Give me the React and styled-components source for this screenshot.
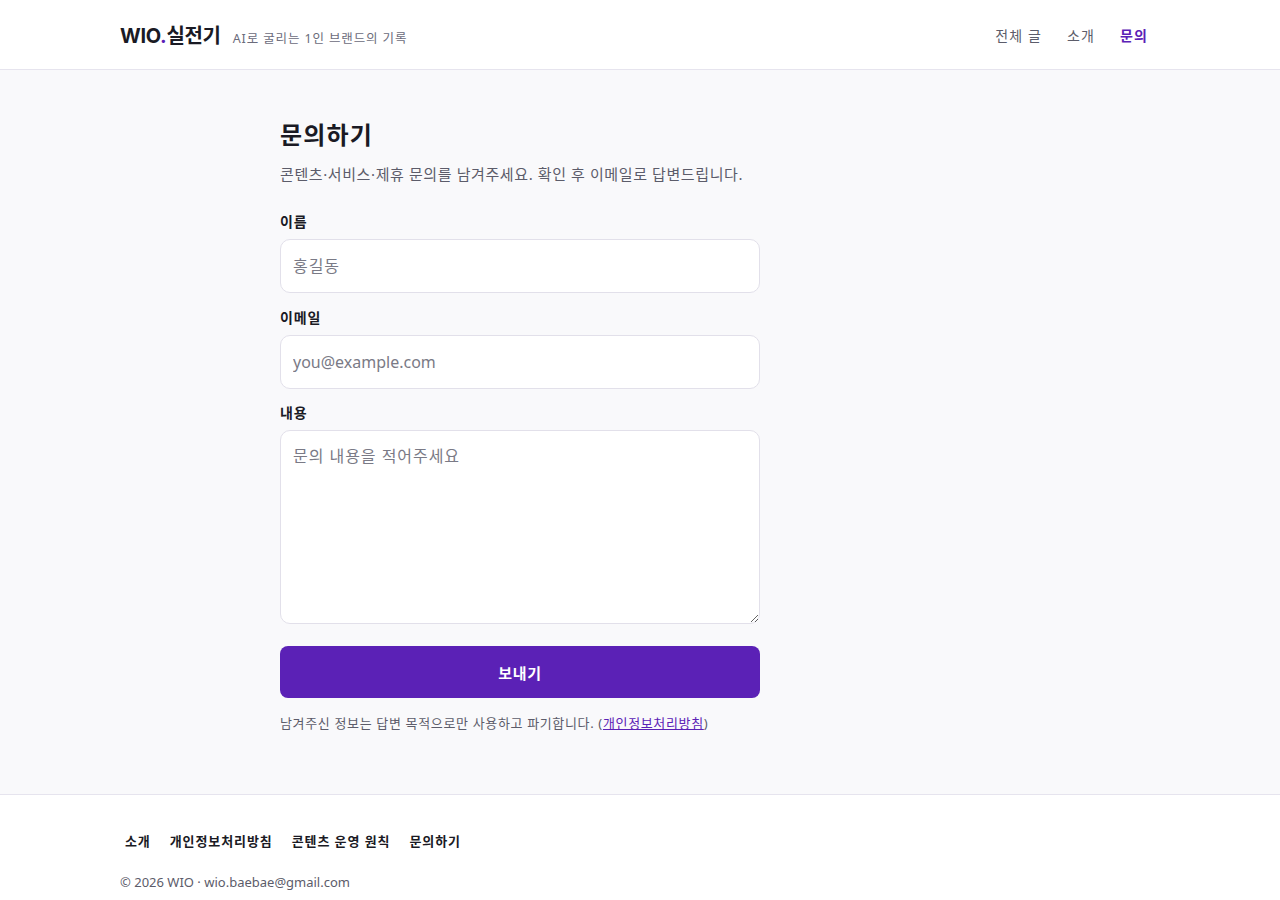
import React from 'react';
import styled, { createGlobalStyle } from 'styled-components';

const Global = createGlobalStyle`
  * { box-sizing: border-box; }
  body {
    margin: 0;
    background: #fff;
    font-family: "Noto Sans", "Noto Sans CJK KR", sans-serif;
    color: #1a1a24;
  }
`;

const Header = styled.header`
  height: 70px;
  background: #fff;
  border-bottom: 1px solid #e6e4ee;
`;

const Bar = styled.div`
  max-width: 1040px;
  height: 100%;
  margin: 0 auto;
  display: flex;
  align-items: center;
  justify-content: space-between;
`;

const Brand = styled.div`
  display: flex;
  align-items: baseline;
  gap: 12px;
`;

const Logo = styled.a`
  font-family: "Inter", "Noto Sans CJK KR", sans-serif;
  font-size: 20px;
  font-weight: 700;
  letter-spacing: -0.3px;
  color: #1a1a24;
  text-decoration: none;
  span { color: #5b21b6; }
`;

const Tagline = styled.span`
  font-size: 12.5px;
  letter-spacing: 0.07em;
  color: #6b6b7b;
`;

const Nav = styled.nav`
  display: flex;
  gap: 25px;
  margin-right: 12px;
`;

const NavLink = styled.a`
  font-size: 14px;
  letter-spacing: 0.08em;
  text-decoration: none;
  color: ${p => (p.$active ? '#5b21b6' : '#5c5c6a')};
  font-weight: ${p => (p.$active ? 600 : 400)};
`;

const Main = styled.main`
  background: #f9f9fb;
  padding: 49px 0 61px;
`;

const Container = styled.div`
  max-width: 720px;
  margin: 0 auto;
`;

const Column = styled.div`
  max-width: 480px;
`;

const Title = styled.h1`
  margin: 0;
  font-size: 24px;
  line-height: 32px;
  letter-spacing: 0.05em;
  font-weight: 700;
  color: #1a1a24;
`;

const Lead = styled.p`
  margin: 12px 0 27px;
  font-size: 15px;
  line-height: 22px;
  letter-spacing: 0.04em;
  color: #5c5c6a;
`;

const Form = styled.form`
  display: flex;
  flex-direction: column;
`;

const Label = styled.label`
  display: block;
  font-size: 14px;
  line-height: 20px;
  letter-spacing: 0.06em;
  font-weight: 700;
  color: #1a1a24;
  margin-bottom: 7px;
`;

const Field = styled.div`
  margin-bottom: 14.5px;
`;

const inputBase = `
  display: block;
  width: 100%;
  border: 1px solid #e2e0ea;
  border-radius: 10px;
  background: #fff;
  font-family: "Noto Sans", "Noto Sans CJK KR", sans-serif;
  font-size: 16px;
  color: #1a1a24;
  outline: none;
  &::placeholder { color: #7a7a86; }
`;

const Input = styled.input`
  ${inputBase}
  height: 54px;
  padding: 0 12px;
  letter-spacing: ${p => (p.$korean ? '0.06em' : '0')};
`;

const TextArea = styled.textarea`
  ${inputBase}
  height: 194px;
  padding: 13px 12px;
  line-height: 24px;
  letter-spacing: 0.06em;
  resize: vertical;
`;

const Submit = styled.button`
  margin-top: 7.5px;
  height: 52px;
  border: none;
  border-radius: 8px;
  background: #5b21b6;
  color: #fff;
  font-family: "Noto Sans", "Noto Sans CJK KR", sans-serif;
  font-size: 15px;
  letter-spacing: 0.05em;
  font-weight: 700;
  cursor: pointer;
`;

const Note = styled.p`
  margin: 15px 0 0;
  font-size: 13px;
  line-height: 20px;
  letter-spacing: 0.05em;
  color: #5c5c6a;
  a { color: #5b21b6; }
`;

const Footer = styled.footer`
  background: #fff;
  border-top: 1px solid #e6e4ee;
  padding: 36px 0 10px;
`;

const FooterInner = styled.div`
  max-width: 1040px;
  margin: 0 auto;
`;

const FooterLinks = styled.div`
  display: flex;
  gap: 19px;
  padding-left: 5px;
`;

const FooterLink = styled.a`
  font-size: 13px;
  line-height: 20px;
  letter-spacing: 0.07em;
  font-weight: 700;
  color: #1a1a24;
  text-decoration: none;
`;

const Copy = styled.p`
  margin: 21px 0 0;
  font-size: 13px;
  line-height: 20px;
  color: #5c5c6a;
`;

export default function App() {
  return (
    <>
      <Global />
      <Header>
        <Bar>
          <Brand>
            <Logo href="#">WIO<span>.</span>실전기</Logo>
            <Tagline>AI로 굴리는 1인 브랜드의 기록</Tagline>
          </Brand>
          <Nav>
            <NavLink href="#">전체 글</NavLink>
            <NavLink href="#">소개</NavLink>
            <NavLink href="#" $active>문의</NavLink>
          </Nav>
        </Bar>
      </Header>
      <Main>
        <Container>
          <Column>
            <Title>문의하기</Title>
            <Lead>콘텐츠·서비스·제휴 문의를 남겨주세요. 확인 후 이메일로 답변드립니다.</Lead>
            <Form onSubmit={e => e.preventDefault()}>
              <Field>
                <Label htmlFor="name">이름</Label>
                <Input id="name" placeholder="홍길동" $korean />
              </Field>
              <Field>
                <Label htmlFor="email">이메일</Label>
                <Input id="email" type="email" placeholder="you@example.com" />
              </Field>
              <Field>
                <Label htmlFor="body">내용</Label>
                <TextArea id="body" placeholder="문의 내용을 적어주세요" />
              </Field>
              <Submit type="submit">보내기</Submit>
            </Form>
            <Note>
              남겨주신 정보는 답변 목적으로만 사용하고 파기합니다. (<a href="#">개인정보처리방침</a>)
            </Note>
          </Column>
        </Container>
      </Main>
      <Footer>
        <FooterInner>
          <FooterLinks>
            <FooterLink href="#">소개</FooterLink>
            <FooterLink href="#">개인정보처리방침</FooterLink>
            <FooterLink href="#">콘텐츠 운영 원칙</FooterLink>
            <FooterLink href="#">문의하기</FooterLink>
          </FooterLinks>
          <Copy>© 2026 WIO · wio.baebae@gmail.com</Copy>
        </FooterInner>
      </Footer>
    </>
  );
}
